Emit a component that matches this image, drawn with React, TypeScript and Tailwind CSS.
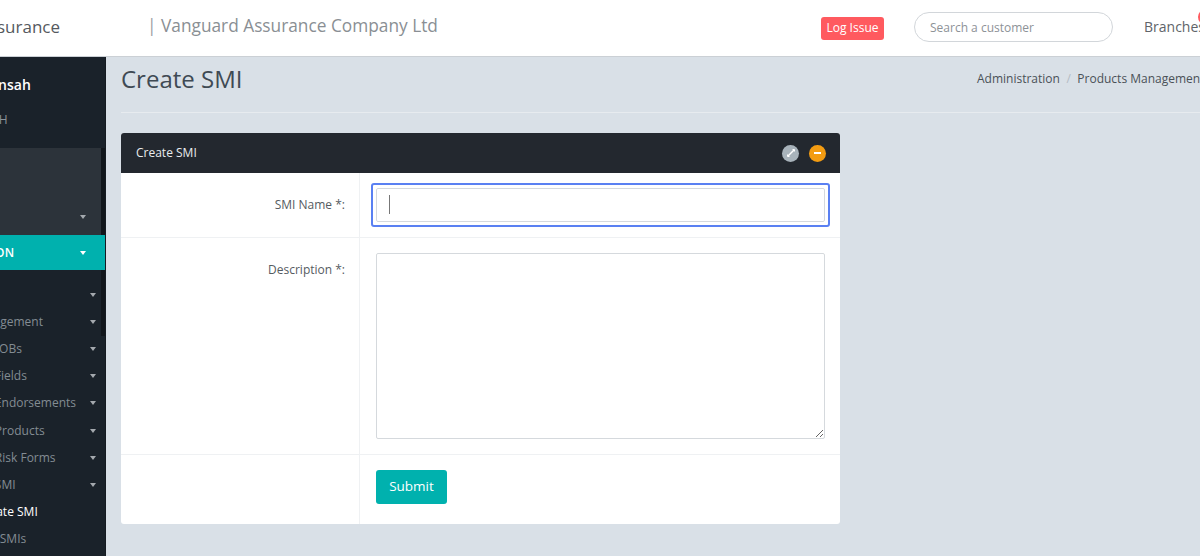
const Caret = ({ className = "" }: { className?: string }) => (
    <span className={`block w-0 h-0 border-x-[3.5px] border-x-transparent border-t-[4px] ${className}`} />
);

const menuItems = [
    { label: "Users", pad: "pl-[87px]", caret: true },
    { label: "Tax Management", pad: "pl-[86px]", caret: true },
    { label: "Manage LOBs", pad: "pl-[85px]", caret: true },
    { label: "Manage Fields", pad: "pl-[87px]", caret: true },
    { label: "Manage Endorsements", pad: "pl-[87px]", caret: true },
    { label: "Manage Products", pad: "pl-[87px]", caret: true },
    { label: "Manage Risk Forms", pad: "pl-[87px]", caret: true },
    { label: "Manage SMI", pad: "pl-[87px]", caret: true },
    { label: "Create SMI", pad: "pl-[117px]", caret: false, active: true },
    { label: "All SMIs", pad: "pl-[123px]", caret: false },
];

const Sidebar = () => {
    return (
        <aside className="relative w-[246px] shrink-0 h-[499px] bg-[#1a222a] overflow-hidden border-r border-[#151b21]">
            <div className="h-[91px] pl-[87px] pt-[18px]">
                <div className="text-[14px] leading-[19px] font-semibold text-white">Kofi Mensah</div>
                <div className="mt-[18px] text-[12px] leading-[16px] text-[#8a9299] ml-[44px]">BH</div>
            </div>
            <div className="h-[87px] bg-[#2c333a] flex items-end pb-[16px] pr-[19px] justify-end">
                <Caret className="border-t-[#a4a9ae]" />
            </div>
            <div className="relative z-10 h-[35px] bg-[#00b1ae] flex items-center justify-between pl-[50px] pr-[19px]">
                <span className="text-[12px] font-semibold text-white tracking-[0.1px]">ADMINISTRATION</span>
                <Caret className="border-t-white" />
            </div>
            <ul className="pt-[11px]">
                {menuItems.map((item) => (
                    <li key={item.label} className="h-[27.2px] flex items-center justify-between pr-[9px]">
                        <span className={`text-[12px] ${item.pad} ${item.active ? "text-white" : "text-[#838c93]"}`}>
                            {item.label}
                        </span>
                        {item.caret && <Caret className="border-t-[#a4a9ae]" />}
                    </li>
                ))}
            </ul>
            <div className="absolute right-0 top-[91px] w-[4px] h-[188px] bg-[#11161b]" />
        </aside>
    );
};

const Header = () => {
    return (
        <header className="h-[57px] bg-white border-b border-[#cbd0d5] flex items-center">
            <div className="w-[200px] text-right text-[17px] text-[#55595e] -mt-[3px] whitespace-nowrap">Vanguard Assurance</div>
            <div className="ml-[88px] w-[673px] text-[17.3px] text-[#8a8f94] -mt-[5px] whitespace-nowrap">
                <span className="text-[#9a9ea3] -ml-[1px]">|</span> Vanguard Assurance Company Ltd
            </div>
            <button className="w-[63px] h-[23px] bg-[#ff5a5f] rounded-[3px] text-white text-[12px]">Log Issue</button>
            <input
                readOnly
                placeholder="Search a customer"
                className="ml-[30px] -mt-[2px] w-[199px] h-[30px] rounded-full border border-[#d2d6da] pl-[15px] text-[12px] outline-none placeholder:text-[#8d9297]"
            />
            <div className="relative ml-[31px] text-[14px] text-[#606469] -mt-[3px]">
                Branches
                <span className="absolute -top-[7px] left-[54px] w-[16px] h-[16px] rounded-full bg-[#ff5a5f]" />
            </div>
        </header>
    );
};

const FormPanel = () => {
    return (
        <div className="w-[719px] mt-[20px] rounded-[3px] overflow-hidden bg-white">
            <div className="h-[40px] bg-[#23282f] flex items-center justify-between pl-[15px] pr-[14px]">
                <span className="text-[12px] text-[#e9ecee]">Create SMI</span>
                <div className="flex items-center gap-[10px]">
                    <span className="w-[17px] h-[17px] rounded-full bg-[#a8b3bb] flex items-center justify-center">
                        <svg width="10" height="10" viewBox="0 0 10 10" fill="none" stroke="#fff" strokeWidth="1.4">
                            <path d="M2 8 8 2" />
                            <path d="M1.5 6.5V8.5H3.5" strokeWidth="1" />
                            <path d="M6.5 1.5H8.5V3.5" strokeWidth="1" />
                        </svg>
                    </span>
                    <span className="w-[17px] h-[17px] rounded-full bg-[#f39c12] flex items-center justify-center">
                        <span className="w-[7px] h-[2px] bg-white" />
                    </span>
                </div>
            </div>
            <div className="flex h-[65px] border-b border-[#eff1f3]">
                <label className="w-[239px] border-r border-[#eff1f3] text-right pr-[14px] pt-[23px] text-[12px] leading-[17px] text-[#555b61]">SMI Name *:</label>
                <div className="pl-[11px] pt-[10px]">
                    <div className="relative w-[459px] h-[44px] border-2 border-[#5a80f2] rounded-[3px] p-[3px]">
                        <input readOnly className="w-full h-full border border-[#d5d9dd] rounded-[2px] outline-none" />
                        <span className="absolute left-[16px] top-[10px] w-[1px] h-[19px] bg-[#777]" />
                    </div>
                </div>
            </div>
            <div className="flex h-[217px] border-b border-[#eff1f3]">
                <label className="w-[239px] border-r border-[#eff1f3] text-right pr-[14px] pt-[23px] text-[12px] leading-[17px] text-[#555b61]">Description *:</label>
                <div className="pl-[16px] pt-[15px]">
                    <textarea readOnly className="block w-[449px] h-[186px] border border-[#d5d9dd] rounded-[2px] outline-none" />
                </div>
            </div>
            <div className="flex h-[69px]">
                <div className="w-[239px] border-r border-[#eff1f3]" />
                <div className="pl-[16px] pt-[15px]">
                    <button className="w-[71px] h-[34px] bg-[#00b1ae] rounded-[3px] text-white text-[13.5px] pb-[2px]">Submit</button>
                </div>
            </div>
        </div>
    );
};

export default function App() {
    return (
        <div className="w-[1200px] h-[556px] overflow-hidden bg-[#d9e0e7] font-['Open_Sans',sans-serif]">
            <div className="w-[1400px] -ml-[140px]">
                <Header />
                <div className="flex">
                    <Sidebar />
                    <main className="flex-1 pl-[15px]">
                        <div className="h-[56px] flex items-start border-b border-[#e7ebef]">
                            <h1 className="w-[856px] text-[24px] leading-[33px] text-[#3f4a54] pt-[5px]">Create SMI</h1>
                            <div className="pt-[13px] text-[12px] leading-[17px] text-[#4a5157] whitespace-nowrap">
                                Administration<span className="mx-[6.5px] text-[#b4bcc4]">/</span>Products Management
                            </div>
                        </div>
                        <FormPanel />
                    </main>
                </div>
            </div>
        </div>
    );
}
